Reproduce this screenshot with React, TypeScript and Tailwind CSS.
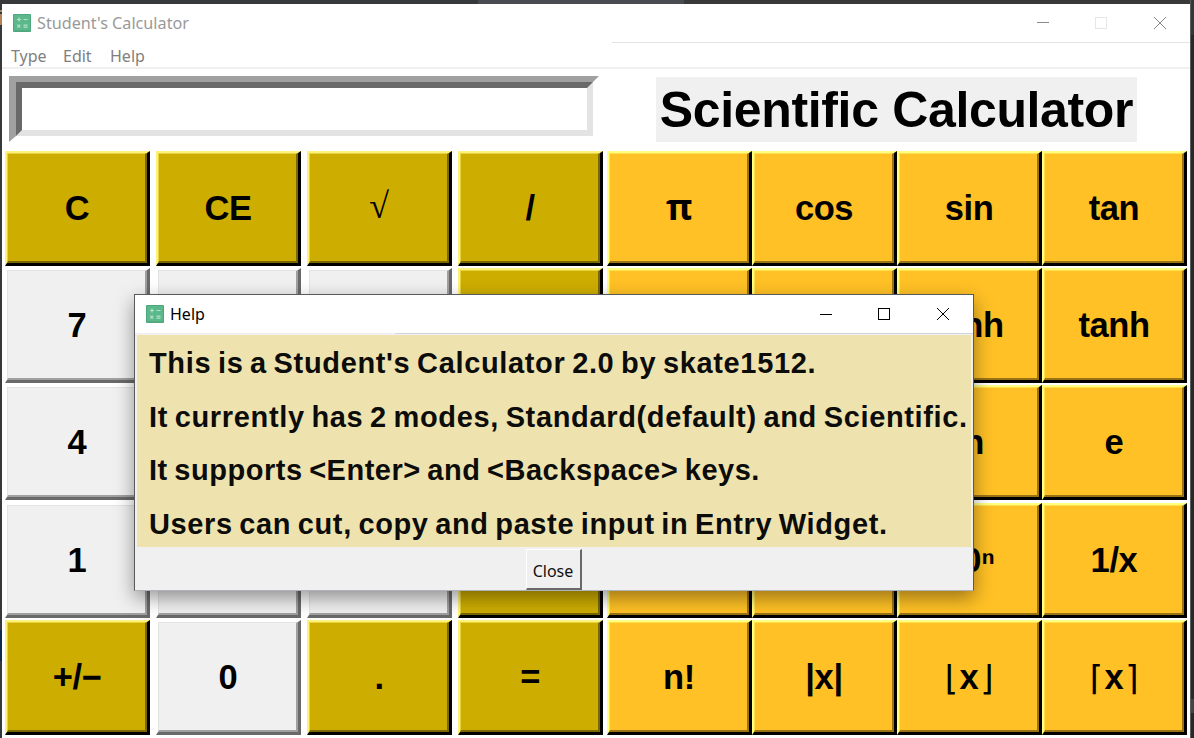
import React from "react";

type Tone = "olive" | "amber" | "grey";

const outer: Record<Tone, string> = {
  olive: "border-t-[#fff27c] border-l-[#fff27c] border-r-black border-b-black",
  amber: "border-t-[#ffff80] border-l-[#ffff80] border-r-black border-b-black",
  grey: "border-t-white border-l-white border-r-[#696969] border-b-[#696969]",
};

const inner: Record<Tone, string> = {
  olive: "bg-[#cdad00] border-t-[#e6d23c] border-l-[#e6d23c] border-r-[#7a6700] border-b-[#7a6700]",
  amber: "bg-[#ffc125] border-t-[#ffe04a] border-l-[#ffe04a] border-r-[#997316] border-b-[#997316]",
  grey: "bg-[#f0f0f0] border-t-[#e3e3e3] border-l-[#e3e3e3] border-r-[#a0a0a0] border-b-[#a0a0a0]",
};

function Key({ label, tone }: { label: React.ReactNode; tone: Tone }) {
  return (
    <button className={`flex h-[115px] w-[145px] border-t-2 border-r-[3px] border-b-[3px] border-l-2 ${outer[tone]}`}>
      <span
        className={`flex h-full w-full items-center justify-center border-t border-r-2 border-b-2 border-l pt-[2px] pl-px text-[34.5px] leading-none font-bold tracking-[-0.4px] whitespace-pre text-black ${inner[tone]}`}
      >
        {label}
      </span>
    </button>
  );
}

const Root = <span className="-mt-[5px] font-['Liberation_Serif',serif] text-[36px] font-normal">√</span>;
const Pi = <span className="-mt-[4px] font-['Open_Sans',sans-serif] text-[36px] leading-none">π</span>;

function Bracketed({ open, close }: { open: string; close: string }) {
  return (
    <span className="flex items-center gap-[2px]">
      <span className="font-['DejaVu_Sans',sans-serif] text-[34px] font-normal">{open}</span>x
      <span className="font-['DejaVu_Sans',sans-serif] text-[34px] font-normal">{close}</span>
    </span>
  );
}

const rows: React.ReactNode[][] = [
  ["C", "CE", Root, "/", Pi, "cos", "sin", "tan"],
  ["7", "", "", "", "", "", "sinh", "tanh"],
  ["4", "", "", "", "", "", "ln", "e"],
  ["1", "", "", "", "", "", "10ⁿ", "1/x"],
  ["+/−", "0", ".", "=", "n!", "|x|", <Bracketed open="⌊" close="⌋" />, <Bracketed open="⌈" close="⌉" />],
];

function toneOf(row: number, col: number): Tone {
  if (col > 3) return "amber";
  if (row === 0 || col === 3) return "olive";
  if (row === 4 && col !== 1) return "olive";
  return "grey";
}

function AppIcon() {
  return (
    <svg width="18" height="18" viewBox="0 0 18 18" className="shrink-0">
      <rect width="18" height="18" rx="1" fill="#4fa57c" />
      <rect x="1" y="1" width="16" height="15.500" fill="#5bb88a" />
      <path
        d="M4 5.500h4M6 3.500v4M10.500 5.500h4M4.300 10.600l3 3M7.300 10.600l-3 3M10.500 11.200h4M10.500 13.200h4"
        stroke="#b5e2cb"
        strokeWidth="1.200"
        fill="none"
      />
    </svg>
  );
}

function Entry() {
  return (
    <div className="mt-[7px] ml-[7px] h-[66px] w-[590px] border-[6px] border-l-[7px] border-t-[#a0a0a0] border-r-white border-b-white border-l-[#a0a0a0]">
      <div className="h-full w-full border-[6px] border-t-[#696969] border-r-[#e3e3e3] border-b-[#e3e3e3] border-l-[#696969] bg-white" />
    </div>
  );
}

function HelpDialog() {
  return (
    <div className="absolute top-[294px] left-[134px] flex h-[297px] w-[840px] flex-col border border-[#5a5a5a] border-b-[#b0b4b8] bg-[#f0f0f0] shadow-[0_7px_18px_rgba(0,0,0,0.4)]">
      <div className="flex h-[38px] shrink-0 items-center bg-white pl-[11px] font-['Noto_Sans',sans-serif] text-[16px] text-black">
        <AppIcon />
        <span className="ml-[6px]">Help</span>
        <svg width="130" height="14" viewBox="0 0 130 14" className="mr-[24px] ml-auto" fill="none" stroke="#000" shapeRendering="crispEdges">
          <path d="M1 7.500h12" />
          <rect x="59.500" y="1.500" width="11" height="11" />
          <path d="M118 1l12 12M130 1l-12 12" shapeRendering="auto" />
        </svg>
      </div>
      <div className="flex h-[2px] shrink-0">
        <div className="w-[260px]" />
        <div className="h-px flex-1 bg-[#d0d7de]" />
      </div>
      <div className="mr-[2px] ml-[2px] flex h-[212px] shrink-0 flex-col bg-[#eee3af] pt-px pl-[12px] text-[29px] font-bold [word-spacing:-2px] whitespace-nowrap text-[#0c0c0a]">
        <p className="h-[53.500px] leading-[54px] tracking-[0.65px]">This is a Student's Calculator 2.0 by skate1512.</p>
        <p className="h-[53.500px] leading-[54px] tracking-[0.65px]">It currently has 2 modes, Standard(default) and Scientific.</p>
        <p className="h-[53.500px] leading-[54px] tracking-[0.52px]">It supports &lt;Enter&gt; and &lt;Backspace&gt; keys.</p>
        <p className="h-[49px] leading-[54px] tracking-[0.61px]">Users can cut, copy and paste input in Entry Widget.</p>
      </div>
      <div className="mt-[2px] flex justify-center pr-px">
        <button className="h-[41px] w-[56px] border-t border-r-2 border-b-2 border-l border-t-white border-r-[#696969] border-b-[#696969] border-l-white bg-[#f0f0f0] pt-[3px] font-['Noto_Sans',sans-serif] text-[16px] text-[#111]">
          Close
        </button>
      </div>
    </div>
  );
}

export default function App() {
  return (
    <div className="relative flex h-[738px] w-[1194px] overflow-hidden bg-[#26282a] font-['Liberation_Sans',Arial,sans-serif]">
      <div className="flex w-[2px] flex-col bg-[#36393c]">
        <div className="mt-[10px] h-[2px] bg-[#a08a6c]" />
        <div className="mt-[2px] h-[11px] bg-[#b08356]" />
        <div className="mt-[605px] h-[31px] bg-[#0c2a4c]" />
      </div>
      <div className="flex w-[1188px] flex-col">
        <div className="flex h-[4px] shrink-0 bg-[#39393a]">
          <div className="w-[476px] bg-[#373839]" />
          <div className="w-[206px] bg-[#484b4f]" />
        </div>
        <div className="flex flex-1 flex-col bg-white">
          <header className="flex h-[38px] items-center pl-[11px] font-['Noto_Sans',sans-serif] text-[16.200px] text-[#999]">
            <AppIcon />
            <span className="ml-[6px]">Student's Calculator</span>
            <svg width="130" height="14" viewBox="0 0 130 14" className="mr-[23px] ml-auto" fill="none" stroke="#888">
              <path d="M0 6.500h12" />
              <rect x="58.500" y="1.500" width="11" height="11" stroke="#e6e6e6" />
              <path d="M117 1l12 12M129 1l-12 12" />
            </svg>
          </header>
          <div className="ml-[610px] h-px bg-[#e3e3e3]" />
          <nav className="flex h-[26px] items-center border-b-2 border-[#f0f0f0] pt-[2px] pl-[9px] font-['Noto_Sans',sans-serif] text-[16px] text-[#808080]">
            <span className="w-[52px]">Type</span>
            <span className="w-[47px]">Edit</span>
            <span>Help</span>
          </nav>
          <div className="flex h-[82px] shrink-0">
            <Entry />
            <h1 className="mt-[8px] ml-[57px] flex h-[65px] w-[481px] items-center justify-center bg-[#f0f0f0] text-[50px] leading-none font-bold tracking-[-0.35px] whitespace-nowrap text-black">
              Scientific Calculator
            </h1>
          </div>
          <main className="grid grid-cols-[151px_151px_151px_149px_145px_145px_145px_145px] grid-rows-[117px_117px_118px_117px_115px] pl-[3px]">
            {rows.map((row, r) => row.map((label, c) => <Key key={`${r}-${c}`} label={label} tone={toneOf(r, c)} />))}
          </main>
        </div>
      </div>
      <div className="flex w-[4px] flex-col border-l border-[#5a5d60] bg-[#26282a]">
        <div className="h-[35px] bg-[#33373a]" />
        <div className="mt-[664px] h-[14px] bg-[#434546]" />
      </div>
      <HelpDialog />
    </div>
  );
}
